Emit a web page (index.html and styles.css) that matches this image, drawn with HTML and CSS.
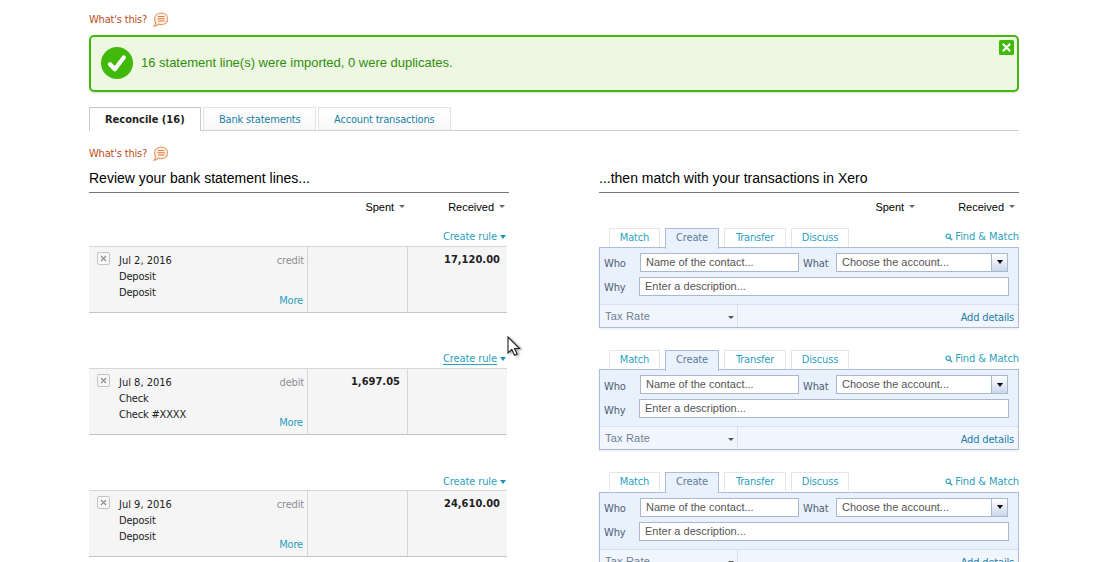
FILE: index.html
```
<!DOCTYPE html>
<html lang="en">
<head>
<meta charset="utf-8">
<title>Bank reconciliation</title>
<link rel="stylesheet" href="styles.css">
</head>
<body>
<svg class="defs" width="0" height="0" aria-hidden="true">
  <symbol id="bubble" viewBox="0 0 16 16">
    <path d="M8.400 1.200C12 1.200 14.600 3.500 14.600 6.900S12 12.700 8.400 12.700c-1 0-2-.2-2.800-.6C4.800 13.200 3 14.100 1 14.200c1-.9 1.600-2.200 1.700-3.600C1.900 9.600 1.500 8.300 1.500 6.900 1.500 3.500 4.500 1.200 8.400 1.200z" fill="#fdf0e2" stroke="#e5a06f" stroke-width="1.300"/>
    <path d="M5 4.500h6.500M4.500 6.800h7.500M5 9h6.500" stroke="#dd7a42" stroke-width="1.100"/>
  </symbol>
  <symbol id="lens" viewBox="0 0 8 8">
    <circle cx="3.200" cy="3.200" r="2.200" fill="none" stroke="#2f9fbd" stroke-width="1.200"/>
    <path d="M4.900 4.900L7.300 7.300" stroke="#2f9fbd" stroke-width="1.400"/>
  </symbol>
  <symbol id="cross" viewBox="0 0 13 13">
    <rect x=".5" y=".5" width="12" height="12" rx="1.500" fill="#f8f8f8" stroke="#c4c4c4"/>
    <path d="M4 4l5 5M9 4l-5 5" stroke="#8c8c8c" stroke-width="1.100"/>
  </symbol>
</svg>

<main class="page">
  <a class="help">What's this?<svg><use href="#bubble"/></svg></a>

  <div class="notice">
    <svg class="tick" viewBox="0 0 32 32"><circle cx="16" cy="16" r="16" fill="#41b90b"/><path d="M9 17.300l4.800 5L22.800 10.500" fill="none" stroke="#fff" stroke-width="4.200" stroke-linecap="round" stroke-linejoin="round"/></svg>
    <p>16 statement line(s) were imported, 0 were duplicates.</p>
    <svg class="dismiss" viewBox="0 0 15 15"><rect width="15" height="15" rx="1.500" fill="#41b90b"/><path d="M3.800 3.800l7.400 7.400M11.200 3.800l-7.400 7.400" stroke="#fff" stroke-width="2.200"/></svg>
  </div>

  <nav class="tabs">
    <a class="tab current">Reconcile (16)</a>
    <a class="tab">Bank statements</a>
    <a class="tab">Account transactions</a>
  </nav>

  <a class="help second">What's this?<svg><use href="#bubble"/></svg></a>

  <div class="heads">
    <div class="head"><h2>Review your bank statement lines...</h2><div class="sort"><span>Spent<i></i></span><span>Received<i></i></span></div></div>
    <div class="head"><h2>...then match with your transactions in Xero</h2><div class="sort"><span>Spent<i></i></span><span>Received<i></i></span></div></div>
  </div>

  <section class="pair">
    <div class="line">
      <a class="rule"><span>Create rule</span><i></i></a>
      <div class="statement">
        <div class="info"><svg class="remove"><use href="#cross"/></svg><p class="text"><span class="date">Jul 2, 2016</span><br>Deposit<br>Deposit</p><div class="side"><span>credit</span><a>More</a></div></div>
        <div class="amount"></div>
        <div class="amount">17,120.00</div>
      </div>
    </div>
    <div class="match">
      <div class="options"><a>Match</a><a class="on">Create</a><a>Transfer</a><a>Discuss</a><a class="find"><svg><use href="#lens"/></svg>Find &amp; Match</a></div>
      <div class="panel">
        <div class="fields">
          <div class="field"><label>Who</label><div class="input name">Name of the contact...</div><label class="what">What</label><div class="input account">Choose the account...<b><i></i></b></div></div>
          <div class="field"><label>Why</label><div class="input description">Enter a description...</div></div>
        </div>
        <div class="foot"><div class="tax">Tax Rate<i></i></div><a>Add details</a></div>
      </div>
    </div>
  </section>

  <section class="pair">
    <div class="line">
      <a class="rule hovered"><span>Create rule</span><i></i></a>
      <div class="statement">
        <div class="info"><svg class="remove"><use href="#cross"/></svg><p class="text"><span class="date">Jul 8, 2016</span><br>Check<br>Check #XXXX</p><div class="side"><span>debit</span><a>More</a></div></div>
        <div class="amount">1,697.05</div>
        <div class="amount"></div>
      </div>
    </div>
    <div class="match">
      <div class="options"><a>Match</a><a class="on">Create</a><a>Transfer</a><a>Discuss</a><a class="find"><svg><use href="#lens"/></svg>Find &amp; Match</a></div>
      <div class="panel">
        <div class="fields">
          <div class="field"><label>Who</label><div class="input name">Name of the contact...</div><label class="what">What</label><div class="input account">Choose the account...<b><i></i></b></div></div>
          <div class="field"><label>Why</label><div class="input description">Enter a description...</div></div>
        </div>
        <div class="foot"><div class="tax">Tax Rate<i></i></div><a>Add details</a></div>
      </div>
    </div>
  </section>

  <section class="pair">
    <div class="line">
      <a class="rule"><span>Create rule</span><i></i></a>
      <div class="statement">
        <div class="info"><svg class="remove"><use href="#cross"/></svg><p class="text"><span class="date">Jul 9, 2016</span><br>Deposit<br>Deposit</p><div class="side"><span>credit</span><a>More</a></div></div>
        <div class="amount"></div>
        <div class="amount">24,610.00</div>
      </div>
    </div>
    <div class="match">
      <div class="options"><a>Match</a><a class="on">Create</a><a>Transfer</a><a>Discuss</a><a class="find"><svg><use href="#lens"/></svg>Find &amp; Match</a></div>
      <div class="panel">
        <div class="fields">
          <div class="field"><label>Who</label><div class="input name">Name of the contact...</div><label class="what">What</label><div class="input account">Choose the account...<b><i></i></b></div></div>
          <div class="field"><label>Why</label><div class="input description">Enter a description...</div></div>
        </div>
        <div class="foot"><div class="tax">Tax Rate<i></i></div><a>Add details</a></div>
      </div>
    </div>
  </section>
</main>

<svg class="pointer" viewBox="0 0 14 21"><path d="M1 1v16l3.800-3.500 2.700 5.800 2.600-1.200-2.600-5.600h5z" fill="#fff" stroke="#222" stroke-width="1.100"/></svg>
</body>
</html>
```
FILE: styles.css
```
* { box-sizing: border-box; }

html { height: 100%; overflow: hidden; }

body {
  margin: 0;
  height: 100%;
  overflow: hidden;
  background: #fff;
  color: #222;
  font: 11px/16px "DejaVu Sans Condensed", "DejaVu Sans", sans-serif;
  letter-spacing: -0.18px;
  white-space: nowrap;
}

p, h2 { margin: 0; }
i { display: block; width: 0; height: 0; border: 3px solid transparent; border-bottom: 0; }
.defs { position: absolute; }

.page { width: 930px; height: 562px; overflow: hidden; margin-left: 89px; padding-top: 11px; }

.help { display: flex; align-items: center; gap: 6px; height: 16px; padding-top: 1px; color: #bd4a20; }
.help svg { width: 16px; height: 16px; }
.help.second { margin-top: 14px; }

.notice {
  display: flex;
  align-items: center;
  height: 57px;
  margin-top: 8px;
  padding: 0 3px 2px 10px;
  border: 2px solid #41b90b;
  border-radius: 5px;
  background: #edf7e2;
  box-shadow: 0 1px 2px rgba(0, 0, 0, .15);
}
.notice p { flex: 1; margin-left: 8px; color: #2f8f0b; font: 13px/16px "Liberation Sans", Arial, sans-serif; letter-spacing: -0.01px; }
.tick { width: 32px; height: 32px; }
.dismiss { align-self: flex-start; width: 15px; height: 15px; margin-top: 3px; }

.tabs { display: flex; gap: 2px; height: 24px; margin-top: 15px; border-bottom: 1px solid #cfcfcf; }
.tab {
  height: 23px;
  padding: 4px 15px 0;
  border: 1px solid #e2e2e2;
  border-bottom: 0;
  background: linear-gradient(#fff, #f8f8f8);
  color: #1b7fa8;
}
.tab.current { width: 112px; height: 24px; border-color: #c8c8c8; background: #fff; color: #222; font-weight: bold; letter-spacing: 0; }
.tab:nth-child(2) { width: 113px; }
.tab:nth-child(3) { width: 133px; }

.heads { display: grid; grid-template-columns: 420px 420px; gap: 90px; margin-top: 8px; }
.head h2 { height: 24px; border-bottom: 1px solid #777; color: #000; font: 14px/18px "Liberation Sans", Arial, sans-serif; letter-spacing: 0; }
.sort { display: flex; justify-content: flex-end; gap: 43px; margin-top: 6px; padding-right: 4px; color: #000; font: 11px/16px "Liberation Sans", Arial, sans-serif; letter-spacing: 0; }
.sort span { display: flex; align-items: center; gap: 5px; }
.sort i { margin-top: -2px; border-top-color: #666; }

.pair { display: grid; grid-template-columns: 420px 420px; gap: 90px; height: 122.35px; }
.heads + .pair { margin-top: 12.6px; }

.line { width: 418px; }
.rule { display: flex; justify-content: flex-end; align-items: center; gap: 3px; height: 18.1px; padding: 1px 1px 0 0; color: #2b9fbe; letter-spacing: -0.1px; }
.rule i { border-width: 4px 3.5px 0; border-top-color: #1b94b5; }
.rule.hovered span { text-decoration: underline; text-underline-offset: 2px; }

.statement { display: grid; grid-template-columns: 218px 100px 100px; height: 67px; border-top: 1px solid #d6d6d6; border-bottom: 1px solid #c4c4c4; background: #f5f5f5; }
.info { display: flex; padding: 5px 3px 0 8px; }
.remove { width: 13px; height: 13px; margin-right: 9px; }
.text { flex: 1; padding-top: 1px; }
.date { letter-spacing: 0; }
.side { display: flex; flex-direction: column; align-items: flex-end; gap: 24px; padding-top: 1px; color: #8f8f8f; }
.side a { margin-right: 1px; color: #2b9fbe; }
.amount { padding: 5px 7px 0 0; border-left: 1px solid #d6d6d6; text-align: right; font-weight: bold; letter-spacing: 0.03px; }

.options { display: flex; height: 19.4px; padding-left: 10px; gap: 5px; }
.options a { height: 19px; border: 1px solid #e3e6ea; border-bottom: 0; text-align: center; line-height: 18px; color: #2b9fbe; }
.options a:nth-child(1) { width: 51px; }
.options a:nth-child(2) { width: 54px; }
.options a:nth-child(3) { width: 62px; }
.options a:nth-child(4) { width: 58px; }
.options a.on { position: relative; height: 21px; border-color: #a9bcd8; background: #e9f1fd; color: #5e7d9b; }
.options a.find { display: flex; flex: 1; align-items: center; justify-content: flex-end; gap: 2px; height: 19px; border: 0; letter-spacing: -0.06px; }
.find svg { width: 8px; height: 8px; }

.panel { height: 81px; border: 1px solid #a9bcd8; background: #e9f1fd; box-shadow: 0 1px 2px rgba(120, 140, 180, .2); }
.fields { display: grid; gap: 5px; height: 56px; padding: 5px 9px 0 4px; align-content: start; }
.field { display: flex; height: 19px; color: #4d6076; }
.field label { width: 36px; padding-top: 3.500px; letter-spacing: -0.1px; }
.field .what { width: 33px; padding-left: 4px; }
.input { height: 19px; padding-left: 5px; border: 1px solid #a9b8cc; background: #fff; color: #555; font: 11px/17px "Liberation Sans", Arial, sans-serif; letter-spacing: 0; }
.name { width: 159px; }
.field:nth-child(2) label { width: 35px; }
.account { display: flex; justify-content: space-between; width: 172px; margin-left: 4px; }
.account b { display: flex; align-items: center; justify-content: center; width: 16px; border-left: 1px solid #a9b8cc; background: linear-gradient(#fff, #cbd7ee); }
.account i { border-width: 4px 3.5px 0; border-top-color: #000; }
.description { width: 370px; }
.foot { display: flex; justify-content: space-between; height: 23px; border-top: 1px solid #d6e1f3; background: #f0f5fe; line-height: 22px; }
.foot > a { height: 22px; padding: 2px 4px 0 0; line-height: 21px; color: #1b7fa8; }
.tax { display: flex; align-items: center; justify-content: space-between; width: 138px; padding: 0 3px 0 5px; border-right: 1px solid #d6e1f3; color: #708090; font: 11px/20px "Liberation Sans", Arial, sans-serif; letter-spacing: 0.2px; }
.tax i { margin-top: 3px; border-width: 3px 3px 0; border-top-color: #555; }

.pointer { position: absolute; left: 507px; top: 336px; width: 14px; height: 21px; filter: drop-shadow(2px 1px 1px rgba(0, 0, 0, .35)); }
```
